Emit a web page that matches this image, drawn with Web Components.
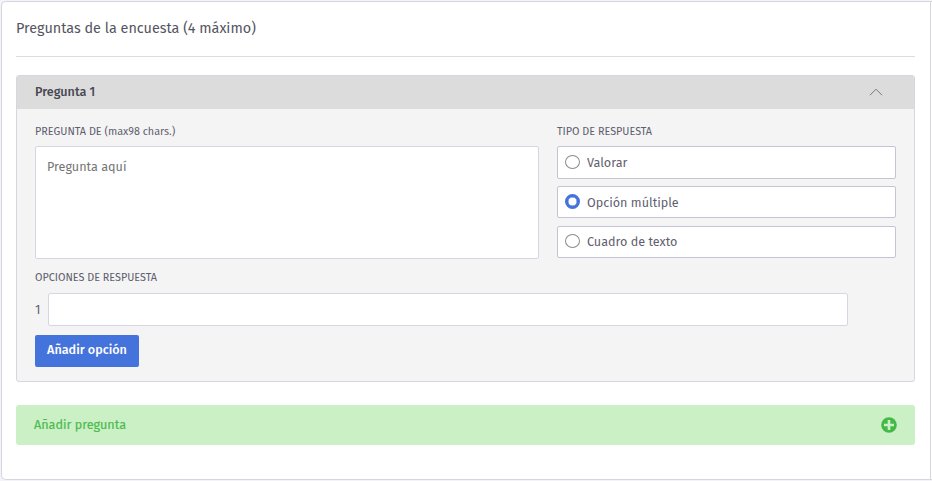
<!DOCTYPE html>
<html lang="es">
<head>
<meta charset="utf-8">
<title>Preguntas de la encuesta</title>
<style>
    body {
        margin: 0;
        background-color: #f4f4f8;
        font-family: "Fira Sans", "Noto Sans", sans-serif;
        color: #5f5f70;
        overflow: hidden;
    }
</style>
</head>
<body>
<survey-card heading="Preguntas de la encuesta (4 máximo)">
    <question-panel heading="Pregunta 1">
        <form-field slot="question" label="PREGUNTA DE (max98 chars.)">
            <text-area placeholder="Pregunta aquí"></text-area>
        </form-field>
        <form-field slot="type" label="TIPO DE RESPUESTA">
            <radio-option style="--height: 33px">Valorar</radio-option>
            <radio-option checked>Opción múltiple</radio-option>
            <radio-option>Cuadro de texto</radio-option>
        </form-field>
        <form-field slot="answers" label="OPCIONES DE RESPUESTA">
            <answer-row number="1"></answer-row>
        </form-field>
        <primary-button slot="action">Añadir opción</primary-button>
    </question-panel>
    <add-question>Añadir pregunta</add-question>
</survey-card>

<script>
class BaseElement extends HTMLElement {
    constructor() {
        super();
        this.attachShadow({ mode: "open" });
    }

    attr(name) {
        return this.getAttribute(name) || "";
    }

    connectedCallback() {
        const template = document.createElement("template");
        template.innerHTML = this.getTemplate() + this.getStyles();
        this.shadowRoot.appendChild(template.content.cloneNode(true));
    }
}

class SurveyCard extends BaseElement {
    getTemplate() {
        return `
        <section class="card">
            <h1>${this.attr("heading")}</h1>
            <slot></slot>
        </section>
        `;
    }

    getStyles() {
        return `
        <style>
        :host {
            display: block;
            box-sizing: border-box;
            height: 479px;
            margin: 1px 0 0 1px;
            border: 1px solid #d6d5e0;
            border-right: none;
            border-radius: 5px 0 0 5px;
            background-color: #fff;
        }
        .card {
            box-sizing: border-box;
            height: 477px;
            margin-right: 1px;
            padding: 0 15px 0 14px;
            border-right: 1px solid #d6d5e0;
        }
        h1 {
            box-sizing: border-box;
            height: 55px;
            margin: 0 0 18px;
            padding-top: 16px;
            border-bottom: 1px solid #dcdcdc;
            font-size: 14.4px;
            line-height: 22px;
            font-weight: 400;
            color: #55555f;
        }
        </style>
        `;
    }
}

class QuestionPanel extends BaseElement {
    getTemplate() {
        return `
        <header>
            <h2>${this.attr("heading")}</h2>
            <svg width="14" height="8" viewBox="0 0 14 8" fill="none" stroke="#777">
                <path d="M1 7.2 7 1.2l6 6"/>
            </svg>
        </header>
        <div class="body">
            <div class="columns">
                <slot name="question"></slot>
                <slot name="type"></slot>
            </div>
            <slot name="answers"></slot>
            <slot name="action"></slot>
        </div>
        `;
    }

    getStyles() {
        return `
        <style>
        :host {
            display: block;
            box-sizing: border-box;
            height: 307px;
            border: 1px solid #d6d5e0;
            border-radius: 3px;
            background-color: #f4f4f4;
            overflow: hidden;
        }
        header {
            display: flex;
            align-items: center;
            justify-content: space-between;
            box-sizing: border-box;
            height: 33px;
            padding: 0 31px 2px 18px;
            background-color: #dcdcdc;
        }
        h2 {
            margin: 0;
            font-size: 12.6px;
            line-height: 18px;
            font-weight: 500;
            color: #484852;
        }
        .body {
            padding: 15px 18px 0;
        }
        .columns {
            display: grid;
            grid-template-columns: 504px 339px;
            gap: 18px;
            margin-bottom: 11px;
        }
        </style>
        `;
    }
}

class FormField extends BaseElement {
    getTemplate() {
        return `
        <label>${this.attr("label")}</label>
        <div><slot></slot></div>
        `;
    }

    getStyles() {
        return `
        <style>
        :host {
            display: block;
        }
        label {
            display: block;
            height: 15px;
            margin-bottom: 7px;
            font-size: 10.8px;
            line-height: 15px;
            white-space: nowrap;
        }
        div {
            display: flex;
            flex-direction: column;
            gap: 8px;
        }
        ::slotted(radio-option:first-child) {
            margin-bottom: -1px;
        }
        </style>
        `;
    }
}

class TextArea extends BaseElement {
    getTemplate() {
        return `<span>${this.attr("placeholder")}</span>`;
    }

    getStyles() {
        return `
        <style>
        :host {
            display: block;
            box-sizing: border-box;
            height: 113px;
            padding: 11px;
            border: 1px solid #d6d5e3;
            border-radius: 2px;
            background-color: #fff;
            font-size: 12.6px;
            line-height: 18px;
            color: #757575;
        }
        </style>
        `;
    }
}

class RadioOption extends BaseElement {
    getTemplate() {
        return `
        <i></i>
        <span><slot></slot></span>
        `;
    }

    getStyles() {
        return `
        <style>
        :host {
            display: flex;
            align-items: center;
            gap: 7px;
            box-sizing: border-box;
            height: var(--height, 32px);
            padding: 0 7px;
            border: 1px solid #c4c3d8;
            border-radius: 2px;
            background-color: #fff;
            font-size: 12.6px;
            line-height: 18px;
        }
        i {
            box-sizing: border-box;
            width: 15px;
            height: 14px;
            margin-top: -2px;
            border: 1px solid #8c8c8c;
            border-radius: 50%;
        }
        :host(:first-child) i {
            margin-top: -1px;
        }
        :host([checked]) i {
            height: 15px;
            border: 3px solid #4573dc;
            box-shadow: inset 0 0 0 0.5px #4573dc;
        }
        :host([checked]) span {
            padding-top: 2px;
        }
        </style>
        `;
    }
}

class AnswerRow extends BaseElement {
    getTemplate() {
        return `
        <span>${this.attr("number")}</span>
        <input type="text">
        `;
    }

    getStyles() {
        return `
        <style>
        :host {
            display: flex;
            align-items: center;
            font-size: 12.6px;
        }
        span {
            width: 13px;
        }
        input {
            box-sizing: border-box;
            width: 800px;
            height: 33px;
            margin: 1px 0 0;
            border: 1px solid #d6d5e0;
            border-radius: 2px;
            background-color: #fff;
        }
        </style>
        `;
    }
}

class PrimaryButton extends BaseElement {
    getTemplate() {
        return `<button type="button"><slot></slot></button>`;
    }

    getStyles() {
        return `
        <style>
        :host {
            display: block;
            margin-top: 9px;
        }
        button {
            display: block;
            width: 104px;
            height: 32px;
            padding: 0 0 3px;
            border: none;
            border-radius: 2px;
            background-color: #4573dc;
            color: #fff;
            font-family: inherit;
            font-size: 12.6px;
            font-weight: 500;
            white-space: nowrap;
        }
        </style>
        `;
    }
}

class AddQuestion extends BaseElement {
    getTemplate() {
        return `
        <span><slot></slot></span>
        <svg width="16" height="16" viewBox="0 0 16 16">
            <circle cx="8" cy="8" r="7.8" fill="#45b948"/>
            <path d="M8 3v10M3 8h10" stroke="#cbf0c6" stroke-width="2.6"/>
        </svg>
        `;
    }

    getStyles() {
        return `
        <style>
        :host {
            display: flex;
            align-items: center;
            justify-content: space-between;
            box-sizing: border-box;
            height: 40px;
            margin-top: 23px;
            padding: 0 18px;
            border-radius: 3px;
            background-color: #cbf0c6;
            color: #4cbb4e;
            font-size: 12.6px;
            -webkit-text-stroke: 0.2px;
        }
        span {
            padding-bottom: 1px;
        }
        </style>
        `;
    }
}

customElements.define("survey-card", SurveyCard);
customElements.define("question-panel", QuestionPanel);
customElements.define("form-field", FormField);
customElements.define("text-area", TextArea);
customElements.define("radio-option", RadioOption);
customElements.define("answer-row", AnswerRow);
customElements.define("primary-button", PrimaryButton);
customElements.define("add-question", AddQuestion);
</script>
</body>
</html>
